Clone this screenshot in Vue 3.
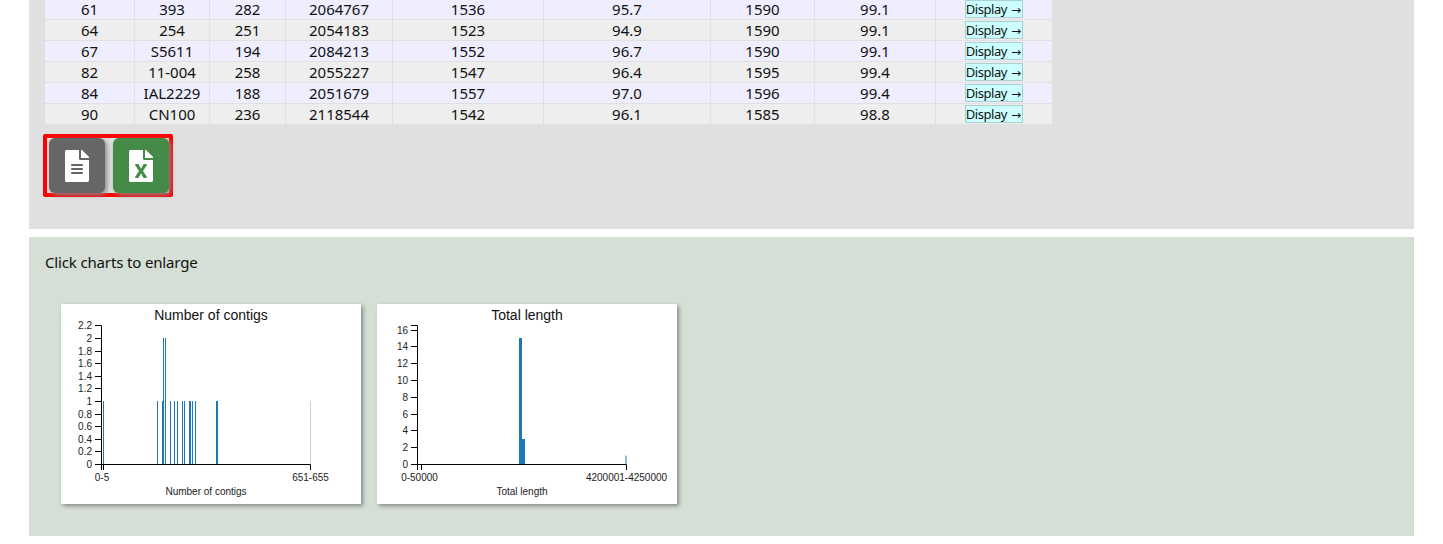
<template>
  <div class="page">
    <section class="panel results">
      <table class="hits">
        <colgroup>
          <col v-for="w in colWidths" :key="w.id" :style="{ width: w.px + 'px' }" />
        </colgroup>
        <tbody>
          <tr v-for="row in rows" :key="row[0]">
            <td v-for="(cell, i) in row" :key="i">{{ cell }}</td>
            <td><a class="display" href="#" @click.prevent>Display <span class="arrow">→</span></a></td>
          </tr>
        </tbody>
      </table>
      <div class="exports">
        <button class="export text" type="button" aria-label="Download text">
          <svg viewBox="0 0 384 512"><path :d="fileTextIcon" /></svg>
        </button>
        <button class="export excel" type="button" aria-label="Download Excel">
          <svg viewBox="0 0 384 512"><path :d="fileExcelIcon" /></svg>
        </button>
      </div>
    </section>

    <section class="panel charts">
      <p class="hint">Click charts to enlarge</p>
      <div class="chart-row">
        <svg v-for="chart in charts" :key="chart.title" class="chart" width="300" height="200">
          <text class="title" x="150" y="16">{{ chart.title }}</text>
          <g transform="translate(40,0)">
            <rect
              v-for="(bar, i) in chart.bars"
              :key="i"
              class="bar"
              :x="bar.x"
              :y="160 - bar.h"
              :width="bar.w"
              :height="bar.h"
              :opacity="bar.o || 1"
            />
            <path class="axis" d="M-6,21.5H0.5V160.5H-6" />
            <g v-for="t in chart.yTicks" :key="t.label">
              <line class="axis" x1="-6" x2="0" :y1="t.y" :y2="t.y" />
              <text class="tick" x="-9" :y="t.y + 3.5" text-anchor="end">{{ t.label }}</text>
            </g>
            <path class="axis" :d="`M0.5,166V160.5H${chart.x1}V166M${chart.x0},160.5V166`" />
            <text class="tick" :x="chart.firstX" y="177" text-anchor="middle">{{ chart.firstLabel }}</text>
            <text class="tick" :x="chart.x1" y="177" text-anchor="middle">{{ chart.lastLabel }}</text>
            <text class="tick" :x="chart.labelX" y="191" text-anchor="middle">{{ chart.title }}</text>
          </g>
        </svg>
      </div>
    </section>
  </div>
</template>

<script setup>
const colWidths = [90, 75, 76, 107, 151, 167, 104, 121, 116].map((px, id) => ({ id, px }));

const rows = [
  ["61", "393", "282", "2064767", "1536", "95.7", "1590", "99.1"],
  ["64", "254", "251", "2054183", "1523", "94.9", "1590", "99.1"],
  ["67", "S5611", "194", "2084213", "1552", "96.7", "1590", "99.1"],
  ["82", "11-004", "258", "2055227", "1547", "96.4", "1595", "99.4"],
  ["84", "IAL2229", "188", "2051679", "1557", "97.0", "1596", "99.4"],
  ["90", "CN100", "236", "2118544", "1542", "96.1", "1585", "98.8"],
];

const fileTextIcon =
  "M224 136V0H24C10.7 0 0 10.7 0 24v464c0 13.3 10.7 24 24 24h336c13.3 0 24-10.7 24-24V160H248c-13.2 0-24-10.8-24-24zm64 236c0 6.6-5.4 12-12 12H108c-6.6 0-12-5.4-12-12v-8c0-6.6 5.4-12 12-12h168c6.6 0 12 5.4 12 12v8zm0-64c0 6.6-5.4 12-12 12H108c-6.6 0-12-5.4-12-12v-8c0-6.6 5.4-12 12-12h168c6.6 0 12 5.4 12 12v8zm0-72v8c0 6.6-5.4 12-12 12H108c-6.6 0-12-5.4-12-12v-8c0-6.6 5.4-12 12-12h168c6.6 0 12 5.4 12 12zm96-114.1v6.1H256V0h6.1c6.4 0 12.5 2.5 17 7l97.9 98c4.5 4.5 7 10.6 7 16.9z";
const fileExcelIcon =
  "M224 136V0H24C10.7 0 0 10.7 0 24v464c0 13.3 10.7 24 24 24h336c13.3 0 24-10.7 24-24V160H248c-13.2 0-24-10.8-24-24zm60.1 106.5L224 336l60.1 93.5c5.1 8-.6 18.5-10.1 18.5h-34.9c-4.4 0-8.5-2.4-10.6-6.3C208.9 405.5 192 373 192 373c-6.1 14.1-9.5 19-36.6 68.8-2.1 3.9-6.1 6.3-10.5 6.3H110c-9.5 0-15.2-10.5-10.1-18.5l60.3-93.5-60.3-93.5c-5.2-8 .6-18.5 10.1-18.5h34.8c4.4 0 8.5 2.4 10.6 6.3 26.1 48.8 20 33.6 36.6 68.5 0 0 6.1-11.7 36.6-68.5 2.1-3.9 6.2-6.3 10.6-6.3H274c9.5-.1 15.2 10.4 10.1 18.4zM384 121.9v6.1H256V0h6.1c6.4 0 12.5 2.5 17 7l97.9 98c4.5 4.5 7 10.6 7 16.9z";

// bar positions are page x minus the chart's y axis, as read from the histogram
const contigBars = [
  { x: 2, h: 63 },
  { x: 56, h: 63 },
  { x: 61, h: 63 },
  { x: 62, h: 126 },
  { x: 64, h: 126 },
  { x: 69, h: 63 },
  { x: 73, h: 63 },
  { x: 76, h: 63 },
  { x: 81, h: 63 },
  { x: 83, h: 63 },
  { x: 88, h: 63, w: 2 },
  { x: 91, h: 63 },
  { x: 94, h: 63 },
  { x: 115, h: 63, w: 2 },
  { x: 209, h: 63, o: 0.3 },
].map((b) => ({ w: 1, ...b }));

const lengthBars = [
  { x: 102, w: 3, h: 126 },
  { x: 105, w: 3, h: 25 },
  { x: 208.5, w: 1, h: 8.4 },
];

const ticks = (labels, unit) =>
  labels.map((v) => ({ label: v, y: Math.round(160 - parseFloat(v) * unit) + 0.5 }));

const charts = [
  {
    title: "Number of contigs",
    bars: contigBars,
    yTicks: ticks(["0", "0.2", "0.4", "0.6", "0.8", "1", "1.2", "1.4", "1.6", "1.8", "2", "2.2"], 63),
    x0: 2.5,
    x1: 209.5,
    firstX: 1,
    firstLabel: "0-5",
    lastLabel: "651-655",
    labelX: 105,
  },
  {
    title: "Total length",
    bars: lengthBars,
    yTicks: ticks(["0", "2", "4", "6", "8", "10", "12", "14", "16"], 8.4),
    x0: 4.5,
    x1: 209.5,
    firstX: 2.5,
    firstLabel: "0-50000",
    lastLabel: "4200001-4250000",
    labelX: 105,
  },
];
</script>

<style scoped>
.page {
  font-family: "Noto Sans", sans-serif;
  color: #111;
  margin-top: -1px;
}

.panel {
  margin: 0 29px 8px;
  padding: 0 16px;
}

.results {
  background: #e0e0e0;
  padding-bottom: 32px;
}

.hits {
  border-collapse: collapse;
  table-layout: fixed;
  width: 1007px;
  margin-left: -1px;
  font-size: 15px;
}

.hits td {
  height: 20px;
  padding: 0;
  border: 1px solid #e0e0e0;
  border-width: 0 1px 1px 0;
  text-align: center;
  line-height: 20px;
}

.hits td:first-child {
  border-left-width: 1px;
}

.hits td:last-child {
  border-right: 0;
}

.hits tr:nth-child(odd) {
  background: #eef;
}

.hits tr:nth-child(even) {
  background: #eee;
}

.display {
  display: block;
  box-sizing: border-box;
  width: 58px;
  height: 18px;
  margin: 0 auto;
  border: 1px solid #a9cfcf;
  background: #ccffff;
  color: #111;
  font-size: 13px;
  letter-spacing: -0.45px;
  line-height: 16px;
  text-align: left;
  text-decoration: none;
  white-space: nowrap;
}

.arrow {
  font-family: "DejaVu Sans", sans-serif;
  font-size: 12px;
  letter-spacing: 0;
  margin-left: 1px;
}

.exports {
  display: inline-flex;
  gap: 8px;
  margin: 9px 0 0 -2px;
  padding-left: 2px;
  border: 4px solid #f00;
  border-radius: 2px;
  vertical-align: top;
}

.export {
  display: flex;
  align-items: center;
  justify-content: center;
  width: 56px;
  height: 55px;
  padding: 0;
  border: 0;
  border-radius: 6px;
  box-shadow: 2px 2px 5px #888;
}

.export svg {
  width: 24px;
  height: 32px;
  fill: #fff;
}

.export.text {
  background: #666;
}

.export.excel {
  background: #458a46;
}

.charts {
  background: #d5dfd5;
  height: 299px;
  margin-bottom: 8px;
  overflow: hidden;
}

.hint {
  margin: 0;
  padding-top: 15px;
  font-size: 15px;
  letter-spacing: -0.15px;
  line-height: 20px;
}

.chart-row {
  display: flex;
  gap: 16px;
  padding: 32px 16px 0;
}

.chart {
  display: block;
  background: #fff;
  box-shadow: 2px 2px 4px #888;
  font-family: "Liberation Sans", Arial, sans-serif;
}

.title {
  font-size: 14px;
  text-anchor: middle;
  fill: #111;
}

.tick {
  font-size: 10px;
  fill: #222;
}

.bar {
  fill: #1f77b4;
}

.axis {
  fill: none;
  stroke: #000;
  stroke-width: 1;
}
</style>

<style>
html,
body {
  margin: 0;
  background: #fff;
  overflow: hidden;
}
</style>
